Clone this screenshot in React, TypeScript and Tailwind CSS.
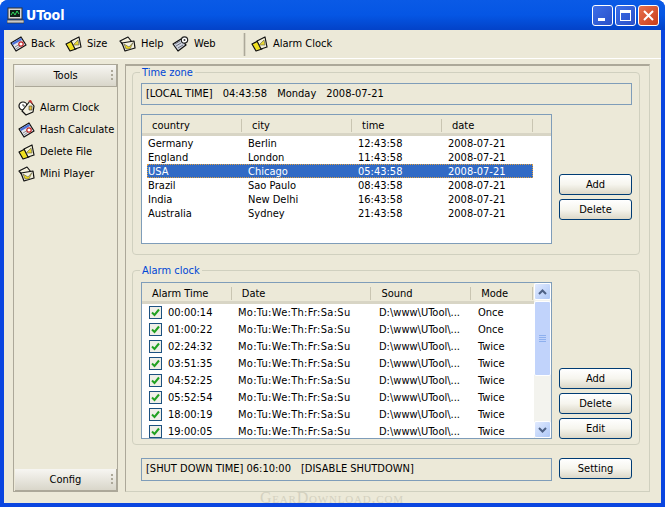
import React from "react";

function Card() {
  return (
    <svg width="17" height="16" viewBox="0 0 17 16" className="shrink-0">
      <path d="M1 7 L11 1 L16 9 L6 15 Z" fill="#e4e6ee" stroke="#111" strokeWidth="1.2" strokeLinejoin="round" />
      <path d="M2 7 L11 2 L12 4 L3 9 Z" fill="#4a70d8" />
      <path d="M5 11 L10 8 M6 13 L10 10" stroke="#777" strokeWidth="0.8" />
      <circle cx="11" cy="8" r="2.2" fill="#fff" stroke="#c02020" strokeWidth="1.2" />
    </svg>
  );
}

function YellowCard() {
  return (
    <svg width="17" height="16" viewBox="0 0 17 16" className="shrink-0">
      <path d="M1 8 L7 5 L11 13 L5 15 Z" fill="#f0e020" stroke="#111" strokeWidth="1.2" strokeLinejoin="round" />
      <path d="M6 5 L14 1 L16 11 L10 13 Z" fill="#f6f2d8" stroke="#111" strokeWidth="1.2" strokeLinejoin="round" />
      <path d="M8 9 L13 4 L14 9 Z" fill="#e8d830" stroke="#555" strokeWidth="0.6" />
    </svg>
  );
}

function Mail() {
  return (
    <svg width="17" height="16" viewBox="0 0 17 16" className="shrink-0">
      <path d="M1 5 L9 1 L13 6 L6 11 Z" fill="#f4f0dc" stroke="#111" strokeWidth="1.2" strokeLinejoin="round" />
      <path d="M3 7 L15 5 L16 12 L6 15 Z" fill="#f6f3e0" stroke="#111" strokeWidth="1.2" strokeLinejoin="round" />
      <path d="M5 8 L10 11 L14 6.5 L11 13 L7 13 Z" fill="#ecd820" stroke="#555" strokeWidth="0.6" />
    </svg>
  );
}

function Page() {
  return (
    <svg width="17" height="16" viewBox="0 0 17 16" className="shrink-0">
      <path d="M1 8 L9 3 L14 9 L6 15 Z" fill="#cdd3de" stroke="#111" strokeWidth="1.2" strokeLinejoin="round" />
      <path d="M3 8 L8 5 M4 10 L9 7 M6 12 L11 9" stroke="#556" strokeWidth="0.8" />
      <circle cx="12.5" cy="4" r="3.2" fill="#fff" stroke="#222" strokeWidth="1.2" />
      <circle cx="12.5" cy="4" r="1" fill="#333" />
    </svg>
  );
}

function ClockHouse() {
  return (
    <svg width="17" height="16" viewBox="0 0 17 16" className="shrink-0">
      <circle cx="5" cy="6" r="4" fill="#fff" stroke="#111" strokeWidth="1.2" />
      <path d="M5 4 V6 H7" stroke="#222" strokeWidth="0.8" fill="none" />
      <path d="M8 6 L12 1 L16 6 L15 12 L8 15 L4 11 Z" fill="#f2efe0" stroke="#111" strokeWidth="1.2" strokeLinejoin="round" />
      <path d="M10 1 L13 0 L15 4 Z" fill="#c83030" />
      <path d="M11 6 H14 V10 H11 Z" fill="#e8c040" stroke="#333" strokeWidth="0.6" />
    </svg>
  );
}

function TbItem({ icon, label, className }: { icon: React.ReactNode; label: string; className: string }) {
  return (
    <div className={`flex items-center whitespace-nowrap ${className}`}>
      {icon}
      <span>{label}</span>
    </div>
  );
}

function XpButton({ label }: { label: string }) {
  return (
    <button className="w-[73px] h-[21px] border border-[#003c74] rounded-[3px] bg-gradient-to-b from-white via-[#f6f5ee] to-[#dcd8c8] text-black text-[11px] leading-none">
      {label}
    </button>
  );
}

function SideHeader({ label }: { label: string }) {
  return (
    <div className="relative h-[22px] pt-[2px] flex items-center justify-center bg-gradient-to-b from-[#f7f6f2] to-[#d9d6ca] border-b border-r border-[#aca899] text-[11px]">
      {label}
      <div className="absolute right-[3px] top-[5px] flex flex-col gap-[2px]">
        <div className="w-[2px] h-[2px] bg-[#aca899]" />
        <div className="w-[2px] h-[2px] bg-[#aca899]" />
        <div className="w-[2px] h-[2px] bg-[#aca899]" />
      </div>
    </div>
  );
}

function HeaderCell({ label, width }: { label: string; width: string }) {
  return (
    <div className={`${width} h-full flex items-center pl-[9px] relative`}>
      {label}
      <div className="absolute right-0 top-[0px] bottom-[1px] w-[2px] border-l border-[#c9c5b2] border-r-white" />
    </div>
  );
}

function Group({ title, className, children }: { title: string; className: string; children: React.ReactNode }) {
  return (
    <fieldset className={`border border-[#d0d0bf] rounded-[4px] ${className}`}>
      <legend className="-ml-[1px] px-[2px] text-[11px] leading-[13px] text-[#0046d5]">{title}</legend>
      {children}
    </fieldset>
  );
}

const zones = [
  ["Germany", "Berlin", "12:43:58"],
  ["England", "London", "11:43:58"],
  ["USA", "Chicago", "05:43:58"],
  ["Brazil", "Sao Paulo", "08:43:58"],
  ["India", "New Delhi", "16:43:58"],
  ["Australia", "Sydney", "21:43:58"],
];

const alarms = [
  ["00:00:14", "Once"],
  ["01:00:22", "Once"],
  ["02:24:32", "Twice"],
  ["03:51:35", "Twice"],
  ["04:52:25", "Twice"],
  ["05:52:54", "Twice"],
  ["18:00:19", "Twice"],
  ["19:00:05", "Twice"],
];

export default function App() {
  return (
    <div className="relative w-[665px] h-[507px] overflow-hidden flex flex-col bg-[#0a45e0] rounded-t-[8px] text-[11px] text-black font-['DejaVu_Sans_Condensed','DejaVu_Sans',sans-serif] whitespace-nowrap">
      <div className="h-[30px] shrink-0 flex items-center pl-[7px] pr-[6px] bg-gradient-to-b from-[#0a5ae6] via-[#0556e4] to-[#0342c8]">
        <svg width="17" height="17" viewBox="0 0 17 17" className="shrink-0">
          <rect x="1" y="1" width="14" height="11" fill="#d8d8d8" stroke="#333" />
          <rect x="3" y="3" width="10" height="7" fill="#102018" />
          <path d="M4 8 L6 5 L8 8 L10 4 L12 7" stroke="#30e060" strokeWidth="1" fill="none" />
          <rect x="0" y="13" width="17" height="3" fill="#c8c8c8" stroke="#333" strokeWidth="0.7" />
        </svg>
        <span className="ml-[2px] text-[14px] font-bold text-white">UTool</span>
        <div className="ml-auto flex gap-[2px]">
          <div className="w-[21px] h-[21px] rounded-[3px] border border-white bg-gradient-to-br from-[#3c6ee8] to-[#2a50c8] flex items-end pl-[5px] pb-[4px]">
            <div className="w-[7px] h-[3px] bg-white" />
          </div>
          <div className="w-[21px] h-[21px] rounded-[3px] border border-white bg-gradient-to-br from-[#3c6ee8] to-[#2a50c8] flex items-center justify-center">
            <div className="w-[11px] h-[11px] border border-t-[3px] border-white" />
          </div>
          <div className="w-[21px] h-[21px] rounded-[3px] border border-white bg-gradient-to-br from-[#e8704c] to-[#c83c18] flex items-center justify-center">
            <svg width="11" height="11" viewBox="0 0 11 11">
              <path d="M1 1 L10 10 M10 1 L1 10" stroke="#fff" strokeWidth="2" />
            </svg>
          </div>
        </div>
      </div>

      <div className="flex-1 min-h-0 mx-[4px] mb-[4px] bg-[#ece9d8] flex flex-col">
        <div className="h-[29px] shrink-0 flex items-center border-b border-white pl-[6px]">
          <TbItem icon={<Card />} label="Back" className="w-[55px] gap-[4px]" />
          <TbItem icon={<YellowCard />} label="Size" className="w-[54px] gap-[5px]" />
          <TbItem icon={<Mail />} label="Help" className="w-[53px] gap-[5px]" />
          <TbItem icon={<Page />} label="Web" className="w-[51px] gap-[5px]" />
          <div className="w-[3px] h-[23px] ml-[20px] bg-[#aca899] border-x border-[#d8d5c5]" />
          <TbItem icon={<YellowCard />} label="Alarm Clock" className="ml-[5px] gap-[5px]" />
        </div>

        <div className="flex-1 min-h-0 flex pl-[9px] pr-[11px] pt-[5px] pb-[11px]">
          <div className="w-[105px] shrink-0 border-x border-y border-[#aca899] pl-[1px] flex flex-col">
            <SideHeader label="Tools" />
            <div className="flex-1 flex flex-col pt-[10px] pl-[3px]">
              {[
                [<ClockHouse key="a" />, "Alarm Clock"],
                [<Card key="b" />, "Hash Calculate"],
                [<YellowCard key="c" />, "Delete File"],
                [<Mail key="d" />, "Mini Player"],
              ].map(([icon, label], i) => (
                <div key={i} className="h-[22px] flex items-center gap-[5px]">
                  {icon}
                  <span>{label}</span>
                </div>
              ))}
            </div>
            <SideHeader label="Config" />
          </div>

          <div className="flex-1 ml-[7px] border-l border-t-2 border-[#aca899] border-b border-r border-b-[#d0d0bf] border-r-[#d0d0bf] pl-[6px] pr-[9px] flex flex-col">
            <Group title="Time zone" className="h-[189px] mt-[0px] pl-[8px] pr-[7px] flex flex-col">
              <div className="h-[22px] mt-[4px] border border-[#7f9db9] flex items-center pl-[4px] gap-[10px]">
                <span>[LOCAL TIME]</span>
                <span>04:43:58</span>
                <span>Monday</span>
                <span>2008-07-21</span>
              </div>
              <div className="flex gap-[7px] mt-[9px]">
                <div className="w-[411px] h-[130px] border border-[#7f9db9] bg-white shrink-0 flex flex-col">
                  <div className="h-[21px] pt-[4px] pl-[1px] flex bg-[#ece9d8] border-b-[3px] border-[#d8d5c5]">
                    <HeaderCell label="country" width="w-[100px]" />
                    <HeaderCell label="city" width="w-[110px]" />
                    <HeaderCell label="time" width="w-[90px]" />
                    <HeaderCell label="date" width="w-[91px]" />
                  </div>
                  <div>
                    {zones.map((z, i) => (
                      <div
                        key={z[0]}
                        className={`h-[14px] ml-[5px] mr-[18px] flex items-center leading-none ${i === 2 ? "bg-[#316ac5] text-white outline-1 -outline-offset-1 outline-dotted outline-[#e0a040]" : ""}`}
                      >
                        <span className="w-[100px] pl-[1px]">{z[0]}</span>
                        <span className="w-[111px] pl-[1px]">{z[1]}</span>
                        <span className="w-[90px]">{z[2]}</span>
                        <span>2008-07-21</span>
                      </div>
                    ))}
                  </div>
                </div>
                <div className="flex flex-col gap-[4px] pt-[60px]">
                  <XpButton label="Add" />
                  <XpButton label="Delete" />
                </div>
              </div>
            </Group>

            <Group title="Alarm clock" className="h-[181px] mt-[9px] pl-[8px] pr-[7px]">
              <div className="flex gap-[7px] mt-[5px]">
                <div className="w-[411px] h-[157px] border border-[#7f9db9] bg-white shrink-0 flex overflow-hidden">
                  <div className="flex-1 min-w-0 flex flex-col">
                    <div className="h-[21px] pt-[4px] shrink-0 pl-[1px] flex bg-[#ece9d8] border-b-[3px] border-[#d8d5c5]">
                      <HeaderCell label="Alarm Time" width="w-[90px]" />
                      <HeaderCell label="Date" width="w-[140px]" />
                      <HeaderCell label="Sound" width="w-[100px]" />
                      <HeaderCell label="Mode" width="w-[62px]" />
                    </div>
                    {alarms.map((a) => (
                      <div key={a[0]} className="h-[17px] shrink-0 flex items-center leading-none pl-[7px]">
                        <div className="w-[13px] h-[13px] border border-[#1c5180] bg-[#f0efe8] flex items-center justify-center shrink-0">
                          <svg width="9" height="9" viewBox="0 0 9 9">
                            <path d="M1 4.5 L3.5 7 L8 1.5" stroke="#21a121" strokeWidth="2" fill="none" />
                          </svg>
                        </div>
                        <span className="w-[76px] pl-[6px] shrink-0">{a[0]}</span>
                        <span className="w-[141px] shrink-0 tracking-[0.3px]">Mo:Tu:We:Th:Fr:Sa:Su</span>
                        <span className="w-[99px] shrink-0">{"D:\\www\\UTool\\..."}</span>
                        <span>{a[1]}</span>
                      </div>
                    ))}
                  </div>
                  <div className="w-[17px] shrink-0 bg-[#f3f3ee] flex flex-col">
                    <div className="h-[17px] shrink-0 rounded-[2px] border border-white bg-gradient-to-br from-[#e1eafe] to-[#aec8f7] flex items-center justify-center">
                      <svg width="9" height="6" viewBox="0 0 9 6"><path d="M1 5 L4.5 1.5 L8 5" stroke="#4d6185" strokeWidth="2" fill="none" /></svg>
                    </div>
                    <div className="h-[75px] mt-[1px] shrink-0 rounded-[2px] border border-white bg-[#c1d3fb] flex flex-col items-center justify-center gap-[1px]">
                      <div className="w-[7px] h-px bg-[#8eb0ee]" />
                      <div className="w-[7px] h-px bg-[#8eb0ee]" />
                      <div className="w-[7px] h-px bg-[#8eb0ee]" />
                      <div className="w-[7px] h-px bg-[#8eb0ee]" />
                    </div>
                    <div className="flex-1" />
                    <div className="h-[17px] shrink-0 rounded-[2px] border border-white bg-gradient-to-br from-[#e1eafe] to-[#aec8f7] flex items-center justify-center">
                      <svg width="9" height="6" viewBox="0 0 9 6"><path d="M1 1 L4.5 4.5 L8 1" stroke="#4d6185" strokeWidth="2" fill="none" /></svg>
                    </div>
                  </div>
                </div>
                <div className="flex flex-col gap-[4px] pt-[86px]">
                  <XpButton label="Add" />
                  <XpButton label="Delete" />
                  <XpButton label="Edit" />
                </div>
              </div>
            </Group>

            <div className="flex gap-[7px] mt-[13px] pl-[9px]">
              <div className="w-[411px] h-[23px] border border-[#7f9db9] flex items-center pl-[4px] gap-[10px] shrink-0">
                <span>[SHUT DOWN TIME] 06:10:00</span>
                <span>[DISABLE SHUTDOWN]</span>
              </div>
              <XpButton label="Setting" />
            </div>
          </div>
        </div>
      </div>
      <div className="absolute left-[260px] top-[490px] text-[16px] leading-none tracking-[0.8px] text-[#d4d1c0] font-['Liberation_Serif',serif] [font-variant:small-caps]">
        GearDownload.com
      </div>
    </div>
  );
}
